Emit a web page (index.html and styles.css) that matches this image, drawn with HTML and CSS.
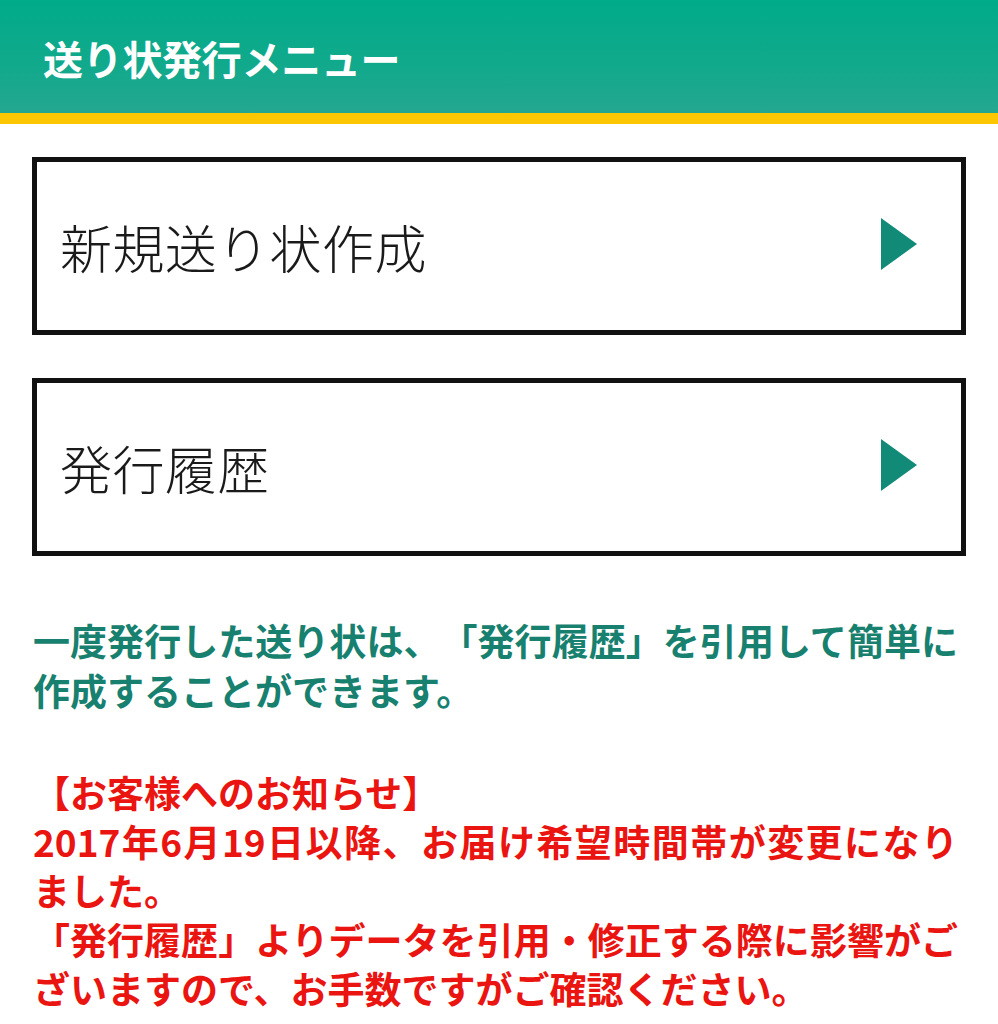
FILE: index.html
```html
<!DOCTYPE html>
<html lang="ja">
<head>
<meta charset="utf-8">
<title>送り状発行メニュー</title>
<link rel="stylesheet" href="styles.css">
</head>
<body>
<header class="topbar">
  <h1 class="topbar-title">送り状発行メニュー</h1>
</header>
<main class="content">
  <nav class="menu">
    <a class="menu-item" href="#">
      <span class="menu-label">新規送り状作成</span>
      <svg class="menu-arrow" viewBox="0 0 36 52" width="36" height="52"><polygon points="0,0 36,26 0,52" fill="#128a78"/></svg>
    </a>
    <a class="menu-item" href="#">
      <span class="menu-label">発行履歴</span>
      <svg class="menu-arrow" viewBox="0 0 36 52" width="36" height="52"><polygon points="0,0 36,26 0,52" fill="#128a78"/></svg>
    </a>
  </nav>
  <p class="info">
    <span class="line full">一度発行した送り状は、「発行履歴」を引用して簡単に</span>
    <span class="line">作成することができます。</span>
  </p>
  <p class="notice">
    <span class="line">【お客様へのお知らせ】</span>
    <span class="line full">2017年6月19日以降、お届け希望時間帯が変更になり</span>
    <span class="line">ました。</span>
    <span class="line full">「発行履歴」よりデータを引用・修正する際に影響がご</span>
    <span class="line">ざいますので、お手数ですがご確認ください。</span>
  </p>
</main>
</body>
</html>
```

FILE: styles.css
```css
* { box-sizing: border-box; }

html, body {
  margin: 0;
  padding: 0;
  background: #ffffff;
}

body {
  font-family: "Noto Sans CJK JP", "Noto Sans", sans-serif;
  width: 998px;
  text-spacing-trim: space-all;
}

.topbar {
  height: 124px;
  background: linear-gradient(to bottom, #00ab8a 0%, #12a98c 60%, #24a791 100%);
  border-bottom: 11px solid #fcc600;
  display: flex;
  align-items: center;
  padding-left: 43px;
}

.topbar-title {
  margin: 0;
  color: #ffffff;
  font-size: 40px;
  font-weight: 700;
  line-height: 1;
  letter-spacing: -0.3px;
  padding-top: 2px;
}

.content {
  padding: 33px 32px 0 32px;
}

.menu {
  display: flex;
  flex-direction: column;
  gap: 43px;
}

.menu-item {
  display: flex;
  align-items: center;
  justify-content: space-between;
  height: 178px;
  border: 5px solid #111111;
  padding: 0 44px 0 23px;
  text-decoration: none;
  color: #1a1a1a;
}

.menu-label {
  font-size: 52px;
  font-weight: 300;
  line-height: 1;
  padding-top: 2px;
  letter-spacing: 0.4px;
}

.menu-arrow {
  display: block;
  margin-top: -4px;
}

.info,
.notice {
  margin: 0;
  padding-left: 1px;
  font-weight: 700;
  font-size: 37px;
}

.info {
  margin-top: 59px;
  color: #17806f;
  line-height: 50px;
}

.notice {
  margin-top: 53px;
  color: #ea1410;
  line-height: 49px;
}

.line {
  display: block;
  white-space: nowrap;
}

.line.full {
  text-align: justify;
  text-align-last: justify;
  width: 925px;
}
```
